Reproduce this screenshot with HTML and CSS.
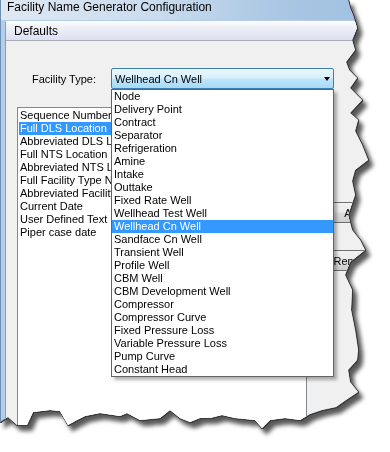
FILE: index.html
```html
<!DOCTYPE html>
<html lang="en">
<head>
  <meta charset="UTF-8">
  <title>Facility Name Generator Configuration</title>
  <link rel="stylesheet" href="styles.css">
</head>
<body>

  <!-- torn screenshot of the dialog -->
  <div class="sheet">
    <div class="window">
      <div class="titlebar">Facility Name Generator Configuration</div>

      <section class="panel">
        <div class="group-header">Defaults</div>

        <div class="group-body">
          <div class="type-row">
            <label class="type-label">Facility Type:</label>
            <div class="combo">
              <span class="combo-value">Wellhead Cn Well</span>
              <span class="combo-arrow"></span>

              <ul class="dropdown">
                <li>Node</li>
                <li>Delivery Point</li>
                <li>Contract</li>
                <li>Separator</li>
                <li>Refrigeration</li>
                <li>Amine</li>
                <li>Intake</li>
                <li>Outtake</li>
                <li>Fixed Rate Well</li>
                <li>Wellhead Test Well</li>
                <li class="selected">Wellhead Cn Well</li>
                <li>Sandface Cn Well</li>
                <li>Transient Well</li>
                <li>Profile Well</li>
                <li>CBM Well</li>
                <li>CBM Development Well</li>
                <li>Compressor</li>
                <li>Compressor Curve</li>
                <li>Fixed Pressure Loss</li>
                <li>Variable Pressure Loss</li>
                <li>Pump Curve</li>
                <li>Constant Head</li>
              </ul>
            </div>
          </div>

          <div class="columns">
            <!-- the open dropdown hides the right part of these names -->
            <ul class="listbox">
              <li><span>Sequence Number</span></li>
              <li class="selected"><span>Full DLS Location</span></li>
              <li><span>Abbreviated DLS Location</span></li>
              <li><span>Full NTS Location</span></li>
              <li><span>Abbreviated NTS Location</span></li>
              <li><span>Full Facility Type Name</span></li>
              <li><span>Abbreviated Facility Type</span></li>
              <li><span>Current Date</span></li>
              <li><span>User Defined Text</span></li>
              <li><span>Piper case date</span></li>
            </ul>

            <div class="buttons">
              <button class="btn">Add</button>
              <button class="btn">Remove</button>
            </div>
          </div>
        </div>
      </section>
    </div>
  </div>

</body>
</html>
```

FILE: styles.css
```css
body {
  margin: 0;
  background: #fff;
  font-family: "Liberation Sans", Arial, sans-serif;
  font-size: 11px;
  color: #000;
}

ul {
  margin: 0;
  padding: 0;
  list-style: none;
}

/* outline + drop shadow of the torn edge */
.sheet {
  width: 390px;
  height: 452px;
  filter: drop-shadow(1px 0 0 #3a3a3a) drop-shadow(0 1px 0 #3a3a3a) drop-shadow(4px 5px 2px rgba(0, 0, 0, 0.65));
}

.window {
  width: 400px;
  height: 440px;
  display: flex;
  flex-direction: column;
  background: #b4cde8;
  border-left: 1px solid #6d8fb5;
  box-sizing: border-box;
  clip-path: polygon(0 0, 348px 0, 350px 8px, 353px 15px, 357px 28px, 352px 40px, 355px 50px, 346px 62px, 349px 70px, 357px 78px, 350px 88px, 355px 93px, 362px 100px, 350px 113px, 358px 120px, 355px 131px, 362px 145px, 368px 160px, 355px 170px, 352px 181px, 355px 195px, 348px 215px, 352px 230px, 360px 240px, 365px 250px, 350px 262px, 345px 275px, 352px 290px, 351px 310px, 355px 330px, 358px 350px, 357px 360px, 348px 370px, 350px 382px, 358px 392px, 346px 400px, 336px 407px, 322px 410px, 310px 414px, 300px 420px, 285px 418px, 270px 420px, 262px 428px, 255px 420px, 235px 418px, 222px 415px, 210px 418px, 200px 418px, 190px 422px, 180px 418px, 170px 410px, 160px 418px, 140px 420px, 127px 413px, 120px 416px, 100px 413px, 85px 416px, 77px 420px, 68px 425px, 60px 411px, 50px 410px, 33px 412px, 27px 425px, 17px 425px, 8px 417px, 0 422px);
}

.titlebar {
  height: 20px;
  line-height: 15px;
  padding-left: 6px;
  font-size: 12px;
  white-space: nowrap;
  background: linear-gradient(90deg, #dfe8f2 0%, #c9dbee 40%, #a9c6e3 70%, #9fbfe0 100%);
}

.panel {
  flex: 1;
  margin: 1px 0 0 4px;
  border-left: 1px solid #9a9a9a;
  border-top: 1px solid #fdfdfd;
  background: #f0f0f0;
  display: flex;
  flex-direction: column;
}

.group-header {
  height: 18px;
  line-height: 18px;
  padding-left: 8px;
  font-size: 12px;
  background: linear-gradient(#fbfbfd 0%, #eef0f8 30%, #dcdff0 100%);
  border-bottom: 1px solid #a7a9b5;
}

.group-body {
  flex: 1;
}

.type-row {
  display: flex;
  align-items: center;
  gap: 15px;
  margin-top: 27px;
}

.type-label {
  width: 90px;
  text-align: right;
}

.combo {
  position: relative;
  width: 223px;
  height: 21px;
  box-sizing: border-box;
  border: 1px solid #3c7fb1;
  border-radius: 2px;
  background: linear-gradient(#eaf6fd 0%, #d9f0fc 48%, #bee6fd 52%, #a7d9f5 100%);
  display: flex;
  align-items: center;
  justify-content: space-between;
  padding: 0 3px 0 3px;
}

.combo-arrow {
  width: 0;
  height: 0;
  border-left: 3.5px solid transparent;
  border-right: 3.5px solid transparent;
  border-top: 4px solid #000;
  margin-top: 1px;
}

.dropdown {
  position: absolute;
  top: 20px;
  left: -1px;
  width: 223px;
  box-sizing: border-box;
  background: #fff;
  border: 1px solid #646464;
  box-shadow: 3px 3px 3px rgba(0, 0, 0, 0.3);
  z-index: 2;
}

.dropdown li,
.listbox li {
  height: 13px;
  line-height: 13px;
  padding-left: 2px;
  white-space: nowrap;
}

.dropdown li.selected,
.listbox li.selected {
  background: #3399ff;
  color: #fff;
}

.columns {
  display: flex;
  margin-top: 18px;
}

.listbox {
  flex-shrink: 0;
  width: 290px;
  height: 330px;
  margin-left: 11px;
  box-sizing: border-box;
  padding: 1px;
  background: #fff;
  border: 1px solid #828790;
  overflow: hidden;
}

.listbox li {
  padding-left: 1px;
}

.listbox li span {
  display: block;
  width: 91px;
  overflow: hidden;
}

.buttons {
  flex-shrink: 0;
  display: flex;
  flex-direction: column;
  gap: 27px;
  margin-left: 8px;
  padding-top: 95px;
}

.btn {
  width: 78px;
  height: 21px;
  padding: 0;
  font-family: inherit;
  font-size: 11px;
  color: #000;
  border: 1px solid #707070;
  border-radius: 3px;
  background: linear-gradient(#f2f2f2 0%, #ebebeb 48%, #dddddd 52%, #cfcfcf 100%);
}
```
